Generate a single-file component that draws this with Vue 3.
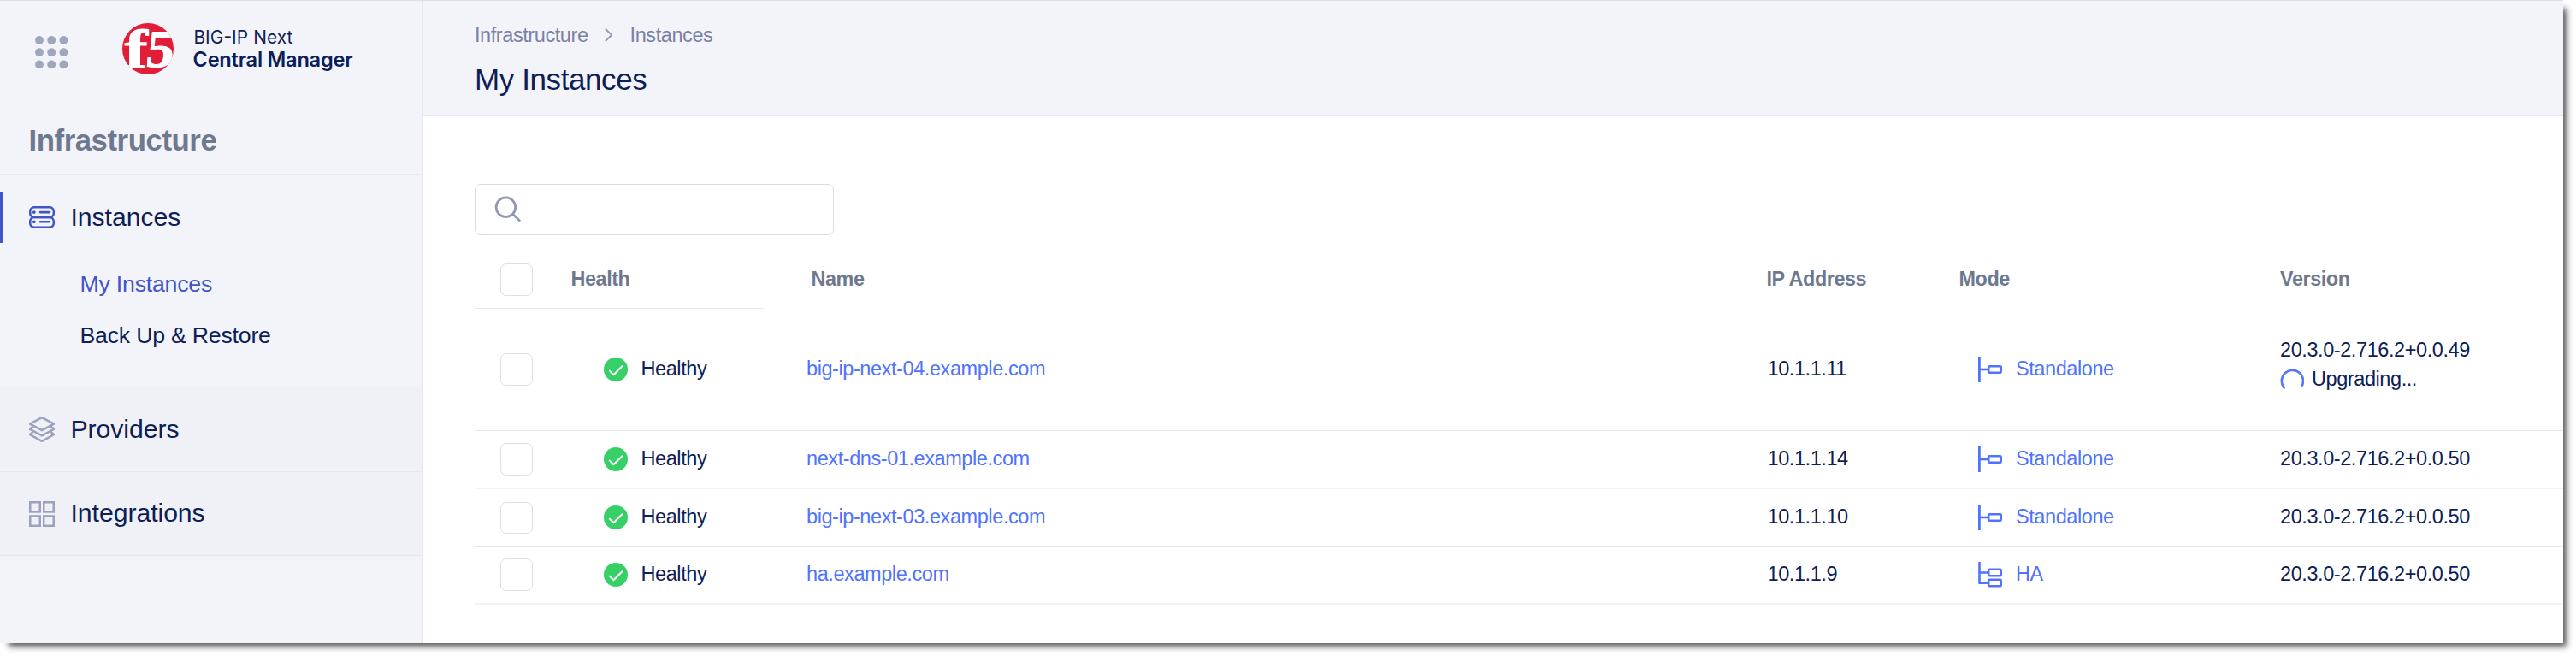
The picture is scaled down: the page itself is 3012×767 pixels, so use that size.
<script setup>
const dots = [5, 19.2, 33.4]
const columns = ['Health', 'Name', 'IP Address', 'Mode', 'Version']
const rows = [
  { name: 'big-ip-next-04.example.com', ip: '10.1.1.11', mode: 'Standalone', version: '20.3.0-2.716.2+0.0.49', upgrading: true, kind: 'tall' },
  { name: 'next-dns-01.example.com', ip: '10.1.1.14', mode: 'Standalone', version: '20.3.0-2.716.2+0.0.50', kind: 'soft' },
  { name: 'big-ip-next-03.example.com', ip: '10.1.1.10', mode: 'Standalone', version: '20.3.0-2.716.2+0.0.50', kind: 'crisp' },
  { name: 'ha.example.com', ip: '10.1.1.9', mode: 'HA', version: '20.3.0-2.716.2+0.0.50', kind: 'soft' }
]
</script>

<template>
  <div class="page">
    <div class="window">
      <aside class="sidebar">
        <div class="brand">
          <svg class="apps" width="39" height="39" viewBox="0 0 39 39">
            <template v-for="y in dots" :key="y">
              <circle v-for="x in dots" :key="x" :cx="x" :cy="y" r="4.9" fill="#9ea8ba" />
            </template>
          </svg>
          <svg class="logo" width="280" height="62" viewBox="0 0 280 62">
            <defs>
              <clipPath id="disc"><circle cx="30" cy="30" r="30" /></clipPath>
            </defs>
            <circle cx="30" cy="30" r="30" fill="#e21d38" />
            <g clip-path="url(#disc)" fill="#fff" stroke="#fff" stroke-width="1" font-family="'Liberation Serif', serif" font-weight="700">
              <text transform="translate(2.4 51.6) scale(1.28 1)" font-size="64">f</text>
              <text transform="translate(26.2 51.3) skewX(-6) scale(1.06 1)" font-size="62">5</text>
            </g>
            <g fill="#0e1e57" font-family="Inter, sans-serif">
              <text x="83.4" y="24" font-size="20.8" textLength="116">BIG-IP Next</text>
              <text x="82.5" y="50.7" font-size="23.6" font-weight="600" textLength="187">Central Manager</text>
            </g>
          </svg>
        </div>
        <h2 class="section-title">Infrastructure</h2>
        <nav class="nav">
          <div class="group">
            <a class="item active">
              <svg width="30" height="26" viewBox="0 0 30 26" fill="none" stroke="#3f55c8" stroke-width="2.5">
                <rect x="1.2" y="1.2" width="27.6" height="11.9" rx="5" />
                <rect x="1.2" y="13" width="27.6" height="11.8" rx="5" />
                <path d="M13 7.1h11M13 18.3h11" stroke-width="2.6" stroke-linecap="round" />
                <circle cx="5.8" cy="7.1" r="1.9" fill="#3f55c8" stroke="none" />
                <circle cx="5.8" cy="18.3" r="1.9" fill="#3f55c8" stroke="none" />
              </svg>
              <span>Instances</span>
            </a>
            <a class="sub current">My Instances</a>
            <a class="sub">Back Up &amp; Restore</a>
          </div>
          <a class="item closed providers">
            <svg width="30" height="30" viewBox="0 0 30 30" fill="none" stroke="#9ba1c0" stroke-width="2.5" stroke-linejoin="round">
              <path d="M15 1.1L29 8.6 15 16.2 1 8.6z" />
              <path d="M4.6 11.4L1 14.8l14 7.5 14-7.5-3.6-3.4" />
              <path d="M4.6 17.8L1 21.2l14 7.6 14-7.6-3.6-3.4" />
            </svg>
            <span>Providers</span>
          </a>
          <a class="item closed integrations">
            <svg width="30" height="30" viewBox="0 0 30 30" fill="none" stroke="#9ba1c0" stroke-width="2.5">
              <rect x="1.25" y="1.25" width="11.5" height="11.2" />
              <rect x="17.25" y="1.25" width="11.5" height="11.2" />
              <rect x="1.25" y="17.5" width="11.5" height="11.3" />
              <rect x="17.25" y="17.5" width="11.5" height="11.3" />
            </svg>
            <span>Integrations</span>
          </a>
        </nav>
      </aside>

      <main class="main">
        <header class="header">
          <div class="crumbs">
            <span>Infrastructure</span>
            <svg width="10" height="16" viewBox="0 0 10 16" fill="none" stroke="#8f95b4" stroke-width="1.9" stroke-linecap="round" stroke-linejoin="round">
              <path d="M1.4 1.2L8.2 7.9 1.4 14.6" />
            </svg>
            <span>Instances</span>
          </div>
          <h1>My Instances</h1>
        </header>

        <section class="content">
          <div class="search">
            <svg width="32" height="32" viewBox="0 0 32 32" fill="none" stroke="#9297b6" stroke-width="2.7">
              <circle cx="13.4" cy="13.2" r="11.3" />
              <path d="M21.6 21.2L30.2 29.6" />
            </svg>
          </div>

          <div class="table">
            <div class="row head">
              <div class="pick"><span class="box"></span></div>
              <div v-for="c in columns" :key="c" :class="{ shifted: c === 'Name' }">{{ c }}</div>
            </div>
            <div v-for="r in rows" :key="r.name" class="row" :class="r.kind">
              <div class="pick"><span class="box"></span></div>
              <div class="health">
                <svg width="28" height="28" viewBox="0 0 28 28" fill="none">
                  <circle cx="14" cy="14" r="14" fill="#37d067" />
                  <path d="M6.8 15.6L11.5 20.3 21.4 10.2" stroke="#fff" stroke-width="2" stroke-linecap="round" stroke-linejoin="round" />
                </svg>
                <span class="label">Healthy</span>
              </div>
              <div class="link"><span class="label">{{ r.name }}</span></div>
              <div class="ip"><span class="label">{{ r.ip }}</span></div>
              <div class="mode link">
                <svg width="28" height="30" viewBox="0 0 28 30" fill="none" stroke="#4f73ff" stroke-width="2.6">
                  <template v-if="r.mode === 'HA'">
                    <path d="M1.5 0V25.2M.5 12.5H12M.5 24.6H12" stroke-width="2.6" />
                    <rect x="12.2" y="8.8" width="14.5" height="7.5" rx="1" />
                    <rect x="12.2" y="20.8" width="14.5" height="7.5" rx="1" />
                  </template>
                  <template v-else>
                    <path d="M1.4 0V30" stroke-width="2.8" />
                    <path d="M1 15H12" />
                    <rect x="12.2" y="11.2" width="14.5" height="7.6" rx="1" />
                  </template>
                </svg>
                <span class="label">{{ r.mode }}</span>
              </div>
              <div class="version">
                <span class="label">{{ r.version }}</span>
                <span v-if="r.upgrading" class="progress">
                  <svg width="28" height="28" viewBox="0 0 28 28" fill="none" stroke="#5577ff" stroke-width="2.6" stroke-linecap="round">
                    <path d="M4.6 22.4A12.6 12.6 0 1 1 25.9 19.6" />
                  </svg>
                  <span>Upgrading...</span>
                </span>
              </div>
            </div>
          </div>
        </section>
      </main>
    </div>
  </div>
</template>

<style>
body { margin: 0; background: #fff; }
</style>

<style scoped>
.page {
  width: 3012px;
  height: 767px;
  overflow: hidden;
  background: #fff;
  font-family: "Liberation Sans", Arial, sans-serif;
  font-size: 23.5px;
  letter-spacing: -0.42px;
  color: #0e1e57;
}
.page *, .page { box-sizing: border-box; }
svg { display: block; flex: none; letter-spacing: 0; }
.window {
  display: flex;
  width: 2997px;
  height: 752px;
  border-top: 1px solid #dedfe0;
  background: #fff;
  box-shadow: 7px 7px 7px -3px rgba(0, 0, 0, 0.65);
}
.sidebar {
  width: 495px;
  flex: none;
  background: #f3f4f9;
  border-right: 2px solid #e6e7f3;
}
.brand { display: flex; height: 122px; padding-left: 41px; }
.apps { margin-top: 41px; }
.logo { margin: 26px 0 0 63px; overflow: visible; }
.section-title {
  margin: 0;
  height: 82px;
  padding-left: 33.5px;
  border-bottom: 2px solid #e6e7f3;
  font-size: 34.8px;
  letter-spacing: -0.46px;
  line-height: 81px;
  color: #6e798f;
}
.nav { display: flex; flex-direction: column; letter-spacing: -0.05px; }
.group { height: 248px; padding-top: 19px; border-bottom: 1px solid #e5e6f0; }
.item { display: flex; align-items: center; padding-left: 34px; gap: 18.5px; font-size: 30.2px; }
.item span { margin-bottom: 1px; }
.active {
  height: 60px;
  border-left: 4px solid #3f55c8;
  border-radius: 0 3px 3px 0;
  padding-left: 30px;
}
.sub {
  display: block;
  height: 60px;
  padding-left: 93.5px;
  font-size: 26.7px;
  letter-spacing: -0.22px;
  line-height: 60px;
}
.current { margin-top: 18px; color: #3f55c8; }
.closed { background: #f0f1f6; border-bottom: 1px solid #e5e6f0; }
.providers { height: 99px; }
.integrations { height: 98px; }

.main { flex: 1; min-width: 0; }
.header {
  height: 135px;
  padding: 24px 0 0 60px;
  background: #f3f4f9;
  border-bottom: 2px solid #e4e6f0;
}
.crumbs { display: flex; align-items: center; height: 33px; color: #7a81a4; }
.crumbs svg { margin: 0 19.5px 2px 19.5px; }
h1 { margin: 14px 0 0; font-size: 35px; letter-spacing: -0.4px; font-weight: 400; line-height: 42px; }
.content { padding: 79px 0 0 60px; }
.search {
  display: flex;
  align-items: center;
  width: 420px;
  height: 60px;
  padding-left: 22px;
  border: 1px solid #dadce6;
  border-radius: 7px;
}
.table { margin-top: 18px; }
.row {
  display: grid;
  grid-template-columns: 112.5px 275.5px 1122.5px 225px 375.5px 1fr;
  align-items: center;
  border-bottom: 1px solid #e6e7ec;
}
.head {
  height: 68px;
  border-bottom: 0;
  font-weight: 700;
  font-size: 23.4px;
  letter-spacing: -0.42px;
  color: #6e798f;
  line-height: 26px;
  background: linear-gradient(#e6e7ee, #e6e7ee) 0 100% / 338px 1px no-repeat;
  align-items: start;
  padding-top: 20px;
}
.head .pick { margin-top: -5px; }
.shifted { padding-left: 5.5px; }
.tall { height: 143px; }
.soft { height: 68px; border-bottom: 2px solid #f3f3f5; }
.crisp { height: 67px; }
.crisp .box { height: 37px; }
.pick { padding-left: 30px; }
.box {
  display: block;
  width: 38px;
  height: 38px;
  border: 1px solid #dddee8;
  border-radius: 7px;
}
.label { margin-bottom: 2px; line-height: 26px; display: block; }
.health { display: flex; align-items: center; gap: 15.5px; padding-left: 38.5px; }
.link { color: #4f73ff; }
.ip { padding-left: 1px; }
.mode { display: flex; align-items: center; gap: 16px; padding-left: 22.5px; }
.tall .version { margin-top: -6px; }
.progress { display: flex; align-items: center; gap: 9px; height: 34px; margin-top: 4px; }
.progress svg { margin-top: 3px; }
.tall .version .label { margin-top: -2px; }
</style>
